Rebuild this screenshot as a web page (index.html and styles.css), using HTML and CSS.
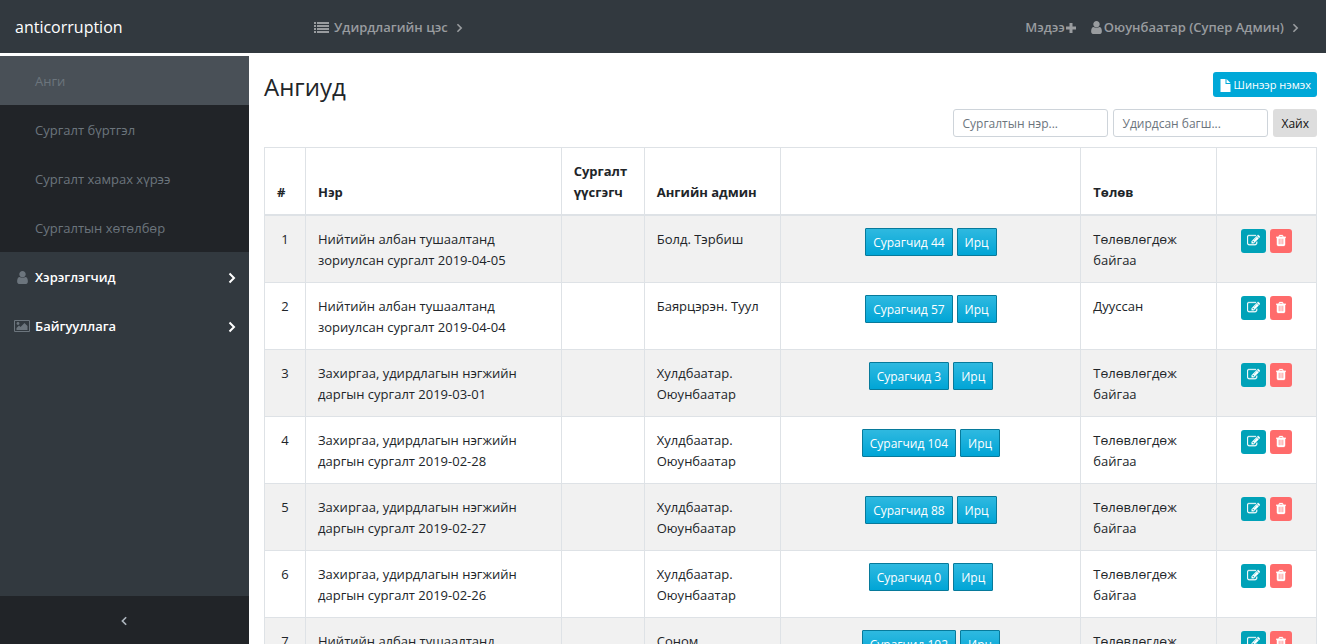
FILE: index.html
```html
<!DOCTYPE html>
<html lang="mn">
<head>
<meta charset="utf-8">
<title>Ангиуд</title>
<link rel="stylesheet" href="styles.css">
</head>
<body>
<svg class="sprite" aria-hidden="true">
  <symbol id="user" viewBox="256 0 1280 1792"><path d="M1536 1399q0 109-62.5 187t-150.5 78h-854q-88 0-150.5-78t-62.5-187q0-85 8.5-160.5t31.5-152 58.5-131 94-89 134.5-34.5q131 128 313 128t313-128q76 0 134.5 34.5t94 89 58.5 131 31.5 152 8.5 160.5zm-256-887q0 159-112.5 271.5t-271.5 112.5-271.5-112.5-112.5-271.5 112.5-271.5 271.5-112.5 271.5 112.5 112.5 271.5z"/></symbol>
  <symbol id="edit" viewBox="0 0 1792 1792"><path d="M888 1184l116-116-152-152-116 116v56h96v96h56zm440-720q-16-16-33 1l-350 350q-17 17-1 33t33-1l350-350q17-17 1-33zm80 594v190q0 119-84.5 203.5t-203.5 84.5h-832q-119 0-203.5-84.5t-84.5-203.5v-832q0-119 84.5-203.5t203.5-84.5h832q63 0 117 25 15 7 18 23 3 17-9 29l-49 49q-14 14-32 8-23-6-45-6h-832q-66 0-113 47t-47 113v832q0 66 47 113t113 47h832q66 0 113-47t47-113v-126q0-13 9-22l64-64q15-15 35-7t20 29zm-96-738l288 288-672 672h-288v-288zm444 132l-92 92-288-288 92-92q28-28 68-28t68 28l152 152q28 28 28 68t-28 68z"/></symbol>
  <symbol id="trash" viewBox="192 0 1408 1792"><path d="M704 1376v-704q0-14-9-23t-23-9h-64q-14 0-23 9t-9 23v704q0 14 9 23t23 9h64q14 0 23-9t9-23zm256 0v-704q0-14-9-23t-23-9h-64q-14 0-23 9t-9 23v704q0 14 9 23t23 9h64q14 0 23-9t9-23zm256 0v-704q0-14-9-23t-23-9h-64q-14 0-23 9t-9 23v704q0 14 9 23t23 9h64q14 0 23-9t9-23zm-544-992h448l-48-117q-7-9-17-11h-317q-10 2-17 11zm928 32v64q0 14-9 23t-23 9h-96v948q0 83-47 143.5t-113 60.5h-832q-66 0-113-58.5t-47-141.5v-952h-96q-14 0-23-9t-9-23v-64q0-14 9-23t23-9h309l70-167q15-37 54-63t79-26h320q40 0 79 26t54 63l70 167h309q14 0 23 9t9 23z"/></symbol>
  <symbol id="list" viewBox="0 0 15 12"><path d="M0 0h2v2H0zM3 0h12v2H3zM0 3h2v2H0zM3 3h12v2H3zM0 6h2v2H0zM3 6h12v2H3zM0 9h2v2H0zM3 9h12v2H3z"/></symbol>
  <symbol id="plus" viewBox="0 0 12 12"><path d="M4.500 1h3v3.500H11v3H7.500V11h-3V7.500H1v-3h3.500z"/></symbol>
  <symbol id="file" viewBox="0 0 12 14"><path d="M1 1h5v5h5v8H1zM7 1l4 4H7z"/></symbol>
  <symbol id="image" viewBox="0 0 16 13"><path fill-rule="evenodd" d="M1 0h14q1 0 1 1v10q0 1-1 1H1q-1 0-1-1V1q0-1 1-1zM1 1v10h14V1zM2.500 10V8L5 5.500l1.500 1.500L10.500 3l3 3v4z"/><circle cx="4" cy="3.500" r="1.400"/></symbol>
  <symbol id="right" viewBox="0 0 8 12"><path class="stroke" d="M1.500 1.500L6 6l-4.500 4.500"/></symbol>
  <symbol id="left" viewBox="0 0 8 12"><path class="stroke" d="M6 1.500L1.500 6 6 10.500"/></symbol>
</svg>
<div class="app">
  <header class="topbar">
    <a class="brand" href="#">anticorruption</a>
    <a class="toplink menu" href="#"><svg class="i-list"><use href="#list"/></svg><span>Удирдлагийн цэс</span><svg class="i-caret"><use href="#right"/></svg></a>
    <nav class="account">
      <a class="toplink" href="#"><span>Мэдээ</span><svg class="i-plus"><use href="#plus"/></svg></a>
      <a class="toplink" href="#"><svg class="i-user"><use href="#user"/></svg><span class="name">Оюунбаатар (Супер Админ)</span><svg class="i-caret"><use href="#right"/></svg></a>
    </nav>
  </header>
  <aside class="sidebar">
    <nav>
      <div class="submenu">
        <a class="side active" href="#">Анги</a>
        <a class="side" href="#">Сургалт бүртгэл</a>
        <a class="side" href="#">Сургалт хамрах хүрээ</a>
        <a class="side" href="#">Сургалтын хөтөлбөр</a>
      </div>
      <a class="side group" href="#"><span class="side-icon"><svg class="i-user"><use href="#user"/></svg></span><span>Хэрэглэгчид</span><svg class="i-arrow"><use href="#right"/></svg></a>
      <a class="side group" href="#"><span class="side-icon"><svg class="i-image"><use href="#image"/></svg></span><span>Байгууллага</span><svg class="i-arrow"><use href="#right"/></svg></a>
    </nav>
    <button class="collapse" type="button" aria-label="Хураах"><svg class="i-caret"><use href="#left"/></svg></button>
  </aside>
  <main class="content">
    <div class="heading">
      <h1>Ангиуд</h1>
      <button class="add" type="button"><svg class="i-file"><use href="#file"/></svg>Шинээр нэмэх</button>
    </div>
    <form class="search">
      <input type="text" placeholder="Сургалтын нэр..." aria-label="Сургалтын нэр">
      <input type="text" placeholder="Удирдсан багш..." aria-label="Удирдсан багш">
      <button type="button">Хайх</button>
    </form>
    <table>
      <colgroup><col class="c-num"><col class="c-name"><col class="c-author"><col class="c-admin"><col class="c-links"><col class="c-state"><col class="c-tools"></colgroup>
      <thead><tr><th>#</th><th>Нэр</th><th>Сургалт үүсгэгч</th><th>Ангийн админ</th><th></th><th>Төлөв</th><th></th></tr></thead>
      <tbody>
        <tr><td>1</td><td>Нийтийн албан тушаалтанд зориулсан сургалт 2019-04-05</td><td></td><td>Болд. Тэрбиш</td><td><div class="links"><button type="button">Сурагчид 44</button><button type="button">Ирц</button></div></td><td>Төлөвлөгдөж байгаа</td><td><div class="tools"><button class="edit" type="button" aria-label="Засах"><svg><use href="#edit"/></svg></button><button class="delete" type="button" aria-label="Устгах"><svg><use href="#trash"/></svg></button></div></td></tr>
        <tr><td>2</td><td>Нийтийн албан тушаалтанд зориулсан сургалт 2019-04-04</td><td></td><td>Баярцэрэн. Туул</td><td><div class="links"><button type="button">Сурагчид 57</button><button type="button">Ирц</button></div></td><td>Дууссан</td><td><div class="tools"><button class="edit" type="button" aria-label="Засах"><svg><use href="#edit"/></svg></button><button class="delete" type="button" aria-label="Устгах"><svg><use href="#trash"/></svg></button></div></td></tr>
        <tr><td>3</td><td>Захиргаа, удирдлагын нэгжийн даргын сургалт 2019-03-01</td><td></td><td>Хулдбаатар. Оюунбаатар</td><td><div class="links"><button type="button">Сурагчид 3</button><button type="button">Ирц</button></div></td><td>Төлөвлөгдөж байгаа</td><td><div class="tools"><button class="edit" type="button" aria-label="Засах"><svg><use href="#edit"/></svg></button><button class="delete" type="button" aria-label="Устгах"><svg><use href="#trash"/></svg></button></div></td></tr>
        <tr><td>4</td><td>Захиргаа, удирдлагын нэгжийн даргын сургалт 2019-02-28</td><td></td><td>Хулдбаатар. Оюунбаатар</td><td><div class="links"><button type="button">Сурагчид 104</button><button type="button">Ирц</button></div></td><td>Төлөвлөгдөж байгаа</td><td><div class="tools"><button class="edit" type="button" aria-label="Засах"><svg><use href="#edit"/></svg></button><button class="delete" type="button" aria-label="Устгах"><svg><use href="#trash"/></svg></button></div></td></tr>
        <tr><td>5</td><td>Захиргаа, удирдлагын нэгжийн даргын сургалт 2019-02-27</td><td></td><td>Хулдбаатар. Оюунбаатар</td><td><div class="links"><button type="button">Сурагчид 88</button><button type="button">Ирц</button></div></td><td>Төлөвлөгдөж байгаа</td><td><div class="tools"><button class="edit" type="button" aria-label="Засах"><svg><use href="#edit"/></svg></button><button class="delete" type="button" aria-label="Устгах"><svg><use href="#trash"/></svg></button></div></td></tr>
        <tr><td>6</td><td>Захиргаа, удирдлагын нэгжийн даргын сургалт 2019-02-26</td><td></td><td>Хулдбаатар. Оюунбаатар</td><td><div class="links"><button type="button">Сурагчид 0</button><button type="button">Ирц</button></div></td><td>Төлөвлөгдөж байгаа</td><td><div class="tools"><button class="edit" type="button" aria-label="Засах"><svg><use href="#edit"/></svg></button><button class="delete" type="button" aria-label="Устгах"><svg><use href="#trash"/></svg></button></div></td></tr>
        <tr><td>7</td><td>Нийтийн албан тушаалтанд</td><td></td><td>Соном.</td><td><div class="links"><button type="button">Сурагчид 102</button><button type="button">Ирц</button></div></td><td>Төлөвлөгдөж байгаа</td><td><div class="tools"><button class="edit" type="button" aria-label="Засах"><svg><use href="#edit"/></svg></button><button class="delete" type="button" aria-label="Устгах"><svg><use href="#trash"/></svg></button></div></td></tr>
      </tbody>
    </table>
  </main>
</div>
</body>
</html>
```

FILE: styles.css
```css
* { box-sizing: border-box; }

body {
  margin: 0;
  background: #fff;
  color: #212529;
  font: 13px/21px "Open Sans", "Noto Sans", sans-serif;
}

a { color: inherit; text-decoration: none; }
button, input { font: inherit; }
button { cursor: pointer; }
svg { fill: currentColor; flex: none; }
.sprite { display: none; }
.stroke { fill: none; stroke: currentColor; stroke-width: 2; }

.app {
  display: grid;
  grid-template: auto minmax(0, 1fr) / 249px minmax(0, 1fr);
  row-gap: 3px;
  height: 100vh;
}

/* Top bar */
.topbar {
  grid-column: 1 / -1;
  display: flex;
  align-items: center;
  padding: 17px 27px 15px 15px;
  background: #32393f;
  color: #999c9f;
}
.brand { width: 299px; color: #fff; font-size: 16px; }
.toplink { display: flex; align-items: center; font-weight: 600; }
.menu { gap: 5px; }
.menu .i-caret { margin-left: 3px; }
.account { display: flex; gap: 14px; margin-left: auto; }
.name { margin: 0 8px 0 2px; }
.i-list { width: 15px; height: 12px; }
.i-caret { width: 7px; height: 10px; }
.i-plus { width: 12px; height: 12px; }
.i-user { width: 11px; height: 15px; }

/* Sidebar */
.sidebar {
  display: flex;
  flex-direction: column;
  justify-content: space-between;
  background: #32393f;
}
.submenu { background: #212428; }
.side {
  display: flex;
  align-items: center;
  padding: 15px 13px 13px 35px;
  color: #6c757d;
}
.active { background: #495057; }
.group { padding-left: 13px; color: #fff; font-weight: 600; }
.side-icon { display: flex; justify-content: center; width: 18px; margin-right: 4px; color: #6c757d; }
.i-image { width: 16px; height: 13px; }
.i-arrow { width: 8px; height: 12px; margin-left: auto; }
.collapse {
  display: flex;
  align-items: center;
  justify-content: center;
  height: 48px;
  padding: 2px 0 0;
  border: 0;
  background: #212428;
  color: #adb5bd;
}

/* Content */
.content { padding: 16px 9px 0 15px; overflow: hidden; }
.heading { display: flex; justify-content: space-between; align-items: flex-start; }
h1 { margin: 0; padding-bottom: 2px; font-size: 24px; line-height: 30px; font-weight: 500; }
.add {
  display: flex;
  align-items: center;
  gap: 2px;
  padding: 2px 6px;
  border: 0;
  border-radius: 3px;
  background: #00a8d8;
  color: #fff;
  font-size: 11px;
}
.i-file { width: 13px; height: 14px; }
.search { display: flex; justify-content: flex-end; gap: 5px; margin: 5px 0 10px; }
.search input {
  width: 155px;
  height: 28px;
  padding: 3px 8px;
  border: 1px solid #ced4da;
  border-radius: 3px;
  font-size: 12px;
}
.search input::placeholder { color: #6c757d; }
.search button {
  padding: 3px 8px;
  border: 0;
  border-radius: 3px;
  background: #ddd;
  color: #111;
  font-size: 12px;
}

table { width: 100%; border-collapse: collapse; table-layout: fixed; }
.c-num { width: 3.9%; }
.c-name { width: 24.3%; }
.c-author { width: 7.9%; }
.c-admin { width: 13%; }
.c-links { width: 28.5%; }
.c-state { width: 12.9%; }
.c-tools { width: 9.5%; }
th, td { padding: 13px 12px 11px; border: 1px solid #dee2e6; text-align: left; vertical-align: top; }
th { border-bottom-width: 2px; vertical-align: bottom; font-weight: 700; }
td:first-child { text-align: center; }
td:nth-child(5), td:nth-child(7) { padding: 12px; }
tbody tr:nth-child(odd) { background: #f1f1f1; }
.links, .tools { display: flex; justify-content: center; gap: 4px; }
.links button {
  height: 28px;
  padding: 0 7px;
  border: 1px solid #077a9b;
  border-radius: 1px;
  background: linear-gradient(#2fb9e0, #00a5d6);
  color: #fff;
  font-size: 12px;
}
.tools { padding-top: 1px; }
.tools button {
  display: flex;
  align-items: center;
  height: 24px;
  padding: 0 6px 1px;
  border: 0;
  border-radius: 3px;
  color: #fff;
}
.tools svg { height: 13px; }
.tools .edit { background: #00a2b8; }
.tools .delete { background: #ff6b6b; }
.edit svg { width: 13px; stroke: currentColor; stroke-width: 40; }
.delete svg { width: 10px; stroke: currentColor; stroke-width: 40; }
```
